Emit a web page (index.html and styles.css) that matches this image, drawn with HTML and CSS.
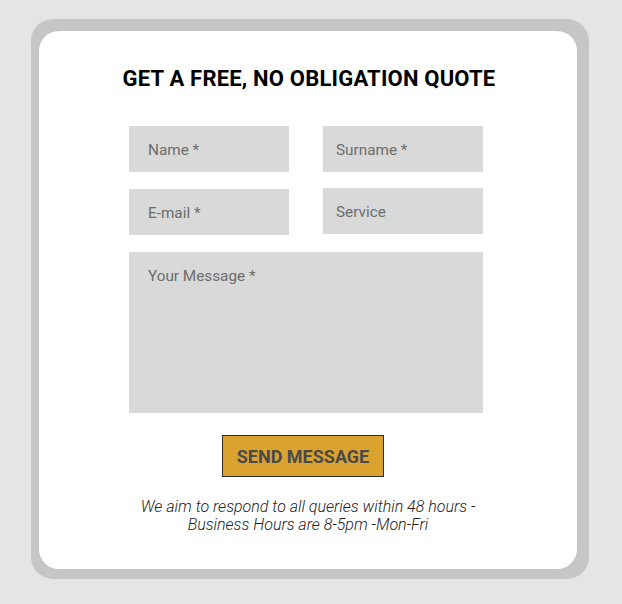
FILE: index.html
```html
<!DOCTYPE html>
<html>
<head>
<meta charset="utf-8">
<link rel="stylesheet" href="styles.css">
</head>
<body>
<div class="frame">
  <div class="card">
    <h1 class="title">GET A FREE, NO OBLIGATION QUOTE</h1>
    <form class="form">
      <div class="row">
        <div class="field">Name *</div>
        <div class="field field-right">Surname *</div>
      </div>
      <div class="row row2">
        <div class="field">E-mail *</div>
        <div class="field field-right field-up">Service</div>
      </div>
      <div class="field message">Your Message *</div>
      <div class="actions">
        <button type="button" class="send">SEND MESSAGE</button>
      </div>
    </form>
    <p class="note">We aim to respond to all queries within 48 hours -<br>Business Hours are 8-5pm -Mon-Fri</p>
  </div>
</div>
</body>
</html>
```
FILE: styles.css
```css
html, body {
  margin: 0;
  padding: 0;
  background: #e5e5e5;
  font-family: Roboto, "Liberation Sans", sans-serif;
}
body {
  padding: 19px 33px 25px 31px;
  width: 622px;
  height: 604px;
  box-sizing: border-box;
}
.frame {
  background: #c6c6c6;
  border-radius: 22px;
  padding: 12px 12px 10px 8px;
  width: 558px;
  height: 560px;
  box-sizing: border-box;
}
.card {
  background: #fff;
  border-radius: 20px;
  height: 538px;
  display: flex;
  flex-direction: column;
  align-items: center;
}
.title {
  margin: 35px 0 0 2px;
  font-size: 22px;
  font-weight: 700;
  letter-spacing: 0.2px;
  color: #000;
  line-height: 26px;
  text-align: center;
}
.form {
  margin: 34px 0 0 -4px;
  width: 354px;
  display: flex;
  flex-direction: column;
}
.row {
  display: flex;
  justify-content: space-between;
  align-items: flex-start;
}
.row2 {
  margin-top: 17px;
}
.field {
  width: 160px;
  height: 46px;
  box-sizing: border-box;
  background: #d9d9d9;
  color: #6d6d6d;
  font-size: 15.3px;
  line-height: 44px;
  padding-top: 2px;
  padding-left: 19px;
}
.field-right {
  padding-left: 13px;
}
.field-up {
  margin-top: -1px;
}
.message {
  width: 354px;
  height: 161px;
  margin-top: 17px;
  line-height: 20px;
  padding-top: 14px;
  padding-left: 19px;
}
.actions {
  display: flex;
  justify-content: center;
  margin-top: 22px;
  padding-right: 6px;
}
.send {
  width: 162px;
  height: 42px;
  background: #dba22f;
  border: 1px solid #2c2c2c;
  color: #4a4a4a;
  font-family: Roboto, "Liberation Sans", sans-serif;
  font-weight: 700;
  font-size: 18px;
  padding: 0;
  cursor: pointer;
}
.note {
  margin: 21px 0 0 0;
  font-size: 16px;
  font-style: italic;
  font-weight: 300;
  line-height: 18px;
  color: #222;
  text-align: center;
}
```
